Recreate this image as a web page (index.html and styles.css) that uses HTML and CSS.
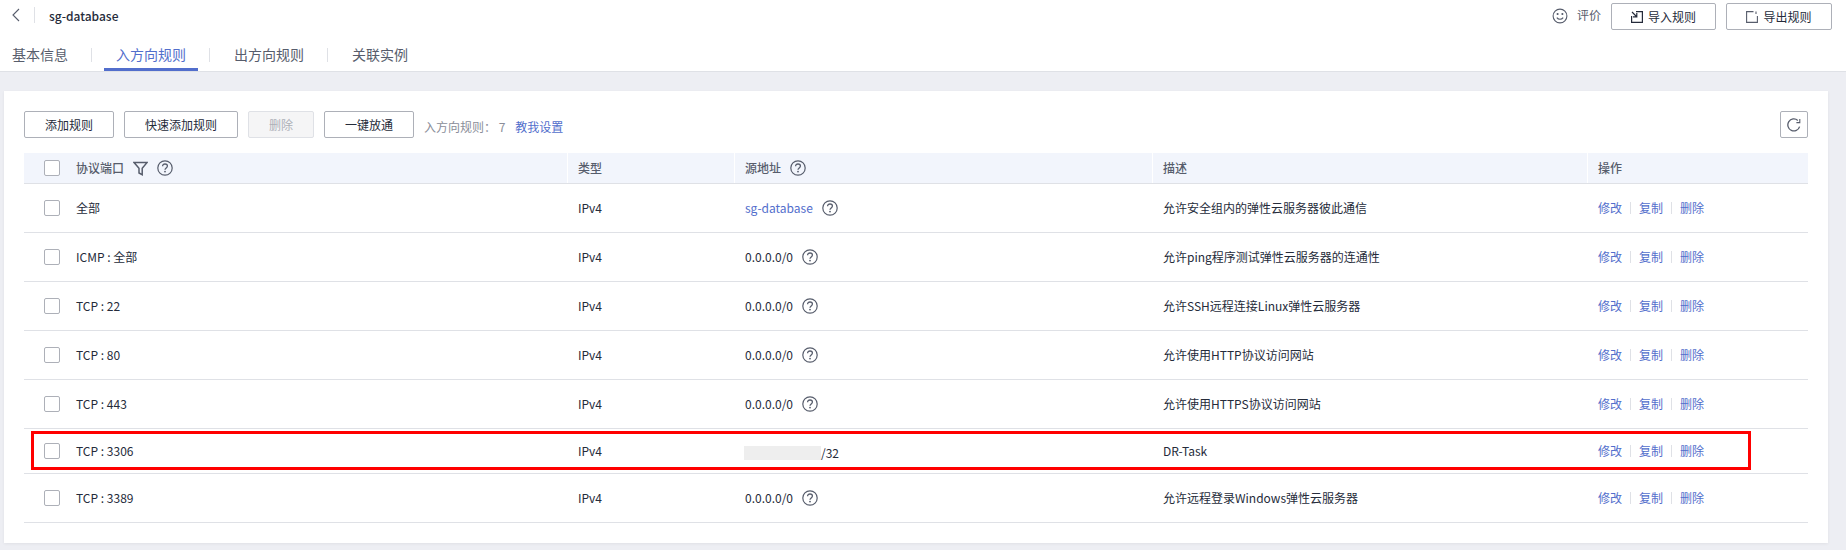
FILE: index.html
```html
<!DOCTYPE html>
<html lang="en">

<head>
    <meta charset="UTF-8">
    <title>sg-database</title>
    <link rel="stylesheet" href="styles.css">
</head>

<body>
    <div class="topbar">
        <div class="title-row">
            <svg class="back" width="8" height="14" viewBox="0 0 8 14"><path d="M7 1 1 7l6 6" fill="none" stroke="#575d6c" stroke-width="1.1"/></svg>
            <span class="title-sep"></span>
            <span class="title">sg-database</span>
            <span class="spacer"></span>
            <svg class="smile" width="16" height="16" viewBox="0 0 16 16" fill="none" stroke="#575d6c" stroke-width="1.1"><circle cx="8" cy="8" r="6.9"/><path d="M4.8 9.6c1.6 2.2 4.8 2.2 6.4 0"/><circle cx="5.6" cy="6" r=".5" fill="#575d6c"/><circle cx="10.4" cy="6" r=".5" fill="#575d6c"/></svg>
            <span class="rate">评价</span>
            <button class="btn btn-top">
                <svg width="12" height="12" viewBox="0 0 12 12" fill="none" stroke="#252b3a" stroke-width="1.2"><path d="M5 .6h6.4v10.8H.6V5"/><path d="M1 1l4.5 4.5M5.8 2v3.8H2"/></svg>
                导入规则
            </button>
            <button class="btn btn-top">
                <svg width="12" height="12" viewBox="0 0 12 12" fill="none" stroke="#575d6c" stroke-width="1.1"><path d="M7.5 .6H.6v10.8h10.8V5"/><path d="M10 .4v2.6"/></svg>
                导出规则
            </button>
        </div>
        <div class="tabs">
            <span class="tab">基本信息</span>
            <span class="tab-sep"></span>
            <span class="tab active">入方向规则</span>
            <span class="tab-sep"></span>
            <span class="tab">出方向规则</span>
            <span class="tab-sep"></span>
            <span class="tab">关联实例</span>
        </div>
    </div>

    <div class="card">
        <div class="toolbar">
            <button class="btn btn-add">添加规则</button>
            <button class="btn btn-quick">快速添加规则</button>
            <button class="btn btn-del" disabled>删除</button>
            <button class="btn btn-open">一键放通</button>
            <span class="count">入方向规则： 7</span>
            <a class="link help-link">教我设置</a>
            <span class="spacer"></span>
            <button class="btn btn-refresh">
                <svg width="14" height="14" viewBox="0 0 14 14" fill="none" stroke="#575d6c" stroke-width="1.3"><path d="M12.6 8.6A6 6 0 1 1 10.8 2.4"/><path d="M12.8 1v3.6H9.4" stroke-width="1.1"/></svg>
            </button>
        </div>

        <div class="rules">
            <div class="row head">
                <div class="cell first"><span class="check"></span>协议端口
                    <svg class="filter" width="15" height="15" viewBox="0 0 14 14" fill="none" stroke="#575d6c" stroke-width="1.4"><path d="M1 1.5h12L8.6 6.8v6L5.6 11.2V6.8z"/></svg>
                    <svg class="q q-head" viewBox="0 0 16 16"><use href="#help"/></svg>
                </div>
                <div class="cell">类型</div>
                <div class="cell">源地址 <svg class="q q-head2" viewBox="0 0 16 16"><use href="#help"/></svg></div>
                <div class="cell">描述</div>
                <div class="cell">操作</div>
            </div>

            <div class="row">
                <div class="cell first"><span class="check"></span>全部</div>
                <div class="cell">IPv4</div>
                <div class="cell"><a class="link">sg-database</a><svg class="q" viewBox="0 0 16 16"><use href="#help"/></svg></div>
                <div class="cell">允许安全组内的弹性云服务器彼此通信</div>
                <div class="cell ops"><a class="link">修改</a><i></i><a class="link">复制</a><i></i><a class="link">删除</a></div>
            </div>
            <div class="row">
                <div class="cell first"><span class="check"></span>ICMP : 全部</div>
                <div class="cell">IPv4</div>
                <div class="cell">0.0.0.0/0<svg class="q" viewBox="0 0 16 16"><use href="#help"/></svg></div>
                <div class="cell">允许ping程序测试弹性云服务器的连通性</div>
                <div class="cell ops"><a class="link">修改</a><i></i><a class="link">复制</a><i></i><a class="link">删除</a></div>
            </div>
            <div class="row">
                <div class="cell first"><span class="check"></span>TCP : 22</div>
                <div class="cell">IPv4</div>
                <div class="cell">0.0.0.0/0<svg class="q" viewBox="0 0 16 16"><use href="#help"/></svg></div>
                <div class="cell">允许SSH远程连接Linux弹性云服务器</div>
                <div class="cell ops"><a class="link">修改</a><i></i><a class="link">复制</a><i></i><a class="link">删除</a></div>
            </div>
            <div class="row">
                <div class="cell first"><span class="check"></span>TCP : 80</div>
                <div class="cell">IPv4</div>
                <div class="cell">0.0.0.0/0<svg class="q" viewBox="0 0 16 16"><use href="#help"/></svg></div>
                <div class="cell">允许使用HTTP协议访问网站</div>
                <div class="cell ops"><a class="link">修改</a><i></i><a class="link">复制</a><i></i><a class="link">删除</a></div>
            </div>
            <div class="row">
                <div class="cell first"><span class="check"></span>TCP : 443</div>
                <div class="cell">IPv4</div>
                <div class="cell">0.0.0.0/0<svg class="q" viewBox="0 0 16 16"><use href="#help"/></svg></div>
                <div class="cell">允许使用HTTPS协议访问网站</div>
                <div class="cell ops"><a class="link">修改</a><i></i><a class="link">复制</a><i></i><a class="link">删除</a></div>
            </div>
            <div class="row short marked">
                <div class="cell first"><span class="check"></span>TCP : 3306</div>
                <div class="cell">IPv4</div>
                <div class="cell addr"><span class="masked"></span>/32</div>
                <div class="cell">DR-Task</div>
                <div class="cell ops"><a class="link">修改</a><i></i><a class="link">复制</a><i></i><a class="link">删除</a></div>
                <div class="red-box"></div>
            </div>
            <div class="row">
                <div class="cell first"><span class="check"></span>TCP : 3389</div>
                <div class="cell">IPv4</div>
                <div class="cell">0.0.0.0/0<svg class="q" viewBox="0 0 16 16"><use href="#help"/></svg></div>
                <div class="cell">允许远程登录Windows弹性云服务器</div>
                <div class="cell ops"><a class="link">修改</a><i></i><a class="link">复制</a><i></i><a class="link">删除</a></div>
            </div>
        </div>
    </div>

    <svg class="defs" width="0" height="0">
        <symbol id="help" viewBox="0 0 16 16">
            <circle cx="8" cy="8" r="7.2" fill="none" stroke="#575d6c" stroke-width="1.2"/>
            <path d="M5.6 6.2c0-1.4 1.1-2.2 2.4-2.2s2.4.8 2.4 2.1c0 1.8-2.4 1.9-2.4 3.7" fill="none" stroke="#575d6c" stroke-width="1.3"/>
            <circle cx="8" cy="11.6" r=".9" fill="#575d6c"/>
        </symbol>
    </svg>
</body>

</html>
```

FILE: styles.css
```css
* {
    box-sizing: border-box;
}

body {
    margin: 0;
    height: 550px;
    overflow: hidden;
    background-color: #edeef3;
    color: #252b3a;
    font-family: "Noto Sans CJK SC", "Open Sans", sans-serif;
    font-size: 12px;
}

.spacer {
    flex: 1;
}

.defs {
    position: absolute;
}

.link {
    color: #526ecc;
}

/* top bar */
.topbar {
    height: 72px;
    background-color: #fff;
    border-bottom: 1px solid #dfe1e6;
}

.title-row {
    display: flex;
    align-items: flex-start;
    height: 38px;
    padding: 3px 14px 0 12px;
}

.back {
    margin-top: 5px;
}

.title-sep {
    width: 1px;
    height: 16px;
    margin: 4px 14px 0 14px;
    background-color: #dfe1e6;
}

.title {
    font-size: 12px;
    line-height: 26px;
    font-weight: 500;
}

.smile {
    margin: 5px 9px 0 0;
}

.rate {
    margin-right: 10px;
    line-height: 24px;
    color: #575d6c;
}

.tabs {
    display: flex;
    align-items: flex-start;
    height: 33px;
    padding-left: 12px;
    font-size: 14px;
    color: #575d6c;
}

.tab {
    height: 33px;
    line-height: 32px;
}

.tab.active {
    padding: 0 12px;
    margin: 0 -12px;
    color: #526ecc;
    border-bottom: 3px solid #526ecc;
}

.tab-sep {
    width: 1px;
    height: 14px;
    margin: 10px 24px 0 23px;
    background-color: #dfe1e6;
}

/* buttons */
.btn {
    display: flex;
    align-items: center;
    justify-content: center;
    height: 27px;
    padding: 0;
    background-color: #fff;
    border: 1px solid #adb0b8;
    border-radius: 2px;
    color: #252b3a;
    font-family: inherit;
    font-size: 12px;
}

.btn-top {
    gap: 5px;
    width: 105px;
    margin-right: 10px;
}

.btn-top:last-child {
    width: 106px;
    margin-right: 0;
}

.btn-add {
    width: 90px;
}

.btn-quick {
    width: 114px;
}

.btn-del {
    width: 66px;
    background-color: #f5f5f6;
    border-color: #dfe1e6;
    color: #adb0b8;
}

.btn-open {
    width: 90px;
}

.btn-refresh {
    width: 28px;
}

/* card */
.card {
    height: 452px;
    margin: 19px 18px 0 4px;
    padding: 20px 20px 0;
    background-color: #fff;
    box-shadow: 0 1px 3px rgba(0, 0, 0, 0.06);
}

.toolbar {
    display: flex;
    align-items: center;
    gap: 10px;
    height: 27px;
    margin-bottom: 15px;
}

.count,
.help-link {
    padding-top: 4px;
}

.count {
    color: #8a8e99;
}

/* rules table */
.row {
    position: relative;
    display: grid;
    grid-template-columns: 543px 167px 418px 435px 221px;
    height: 49px;
    border-bottom: 1px solid #dfe1e6;
}

.row.short {
    height: 45px;
}

.row.head {
    height: 31px;
    background-color: #f2f5fc;
    color: #575d6c;
    font-weight: 500;
}

.cell {
    display: flex;
    align-items: center;
    padding: 0 0 2px 11px;
}

.cell.addr {
    padding-top: 3px;
    padding-bottom: 0;
}

.row.head .cell {
    border-left: 1px solid #fff;
    padding-left: 10px;
}

.row.head .cell.first,
.cell.first {
    border-left: 0;
    padding-left: 20px;
}

.check {
    width: 16px;
    height: 16px;
    margin: 2px 16px 0 0;
    background-color: #fff;
    border: 1px solid #adb0b8;
    border-radius: 2px;
}

.q {
    width: 16px;
    height: 16px;
    margin: 2px 0 0 9px;
}

.filter {
    margin: 2px 0 0 9px;
}

.ops i {
    width: 1px;
    height: 12px;
    margin: 2px 8px 0;
    background-color: #dfe1e6;
}

.masked {
    width: 77px;
    height: 14px;
    margin-left: -1px;
    background-color: #eeeeee;
}

.red-box {
    position: absolute;
    top: 2px;
    left: 7px;
    width: 1720px;
    height: 39px;
    border: 3px solid #ff0000;
    pointer-events: none;
}
```
